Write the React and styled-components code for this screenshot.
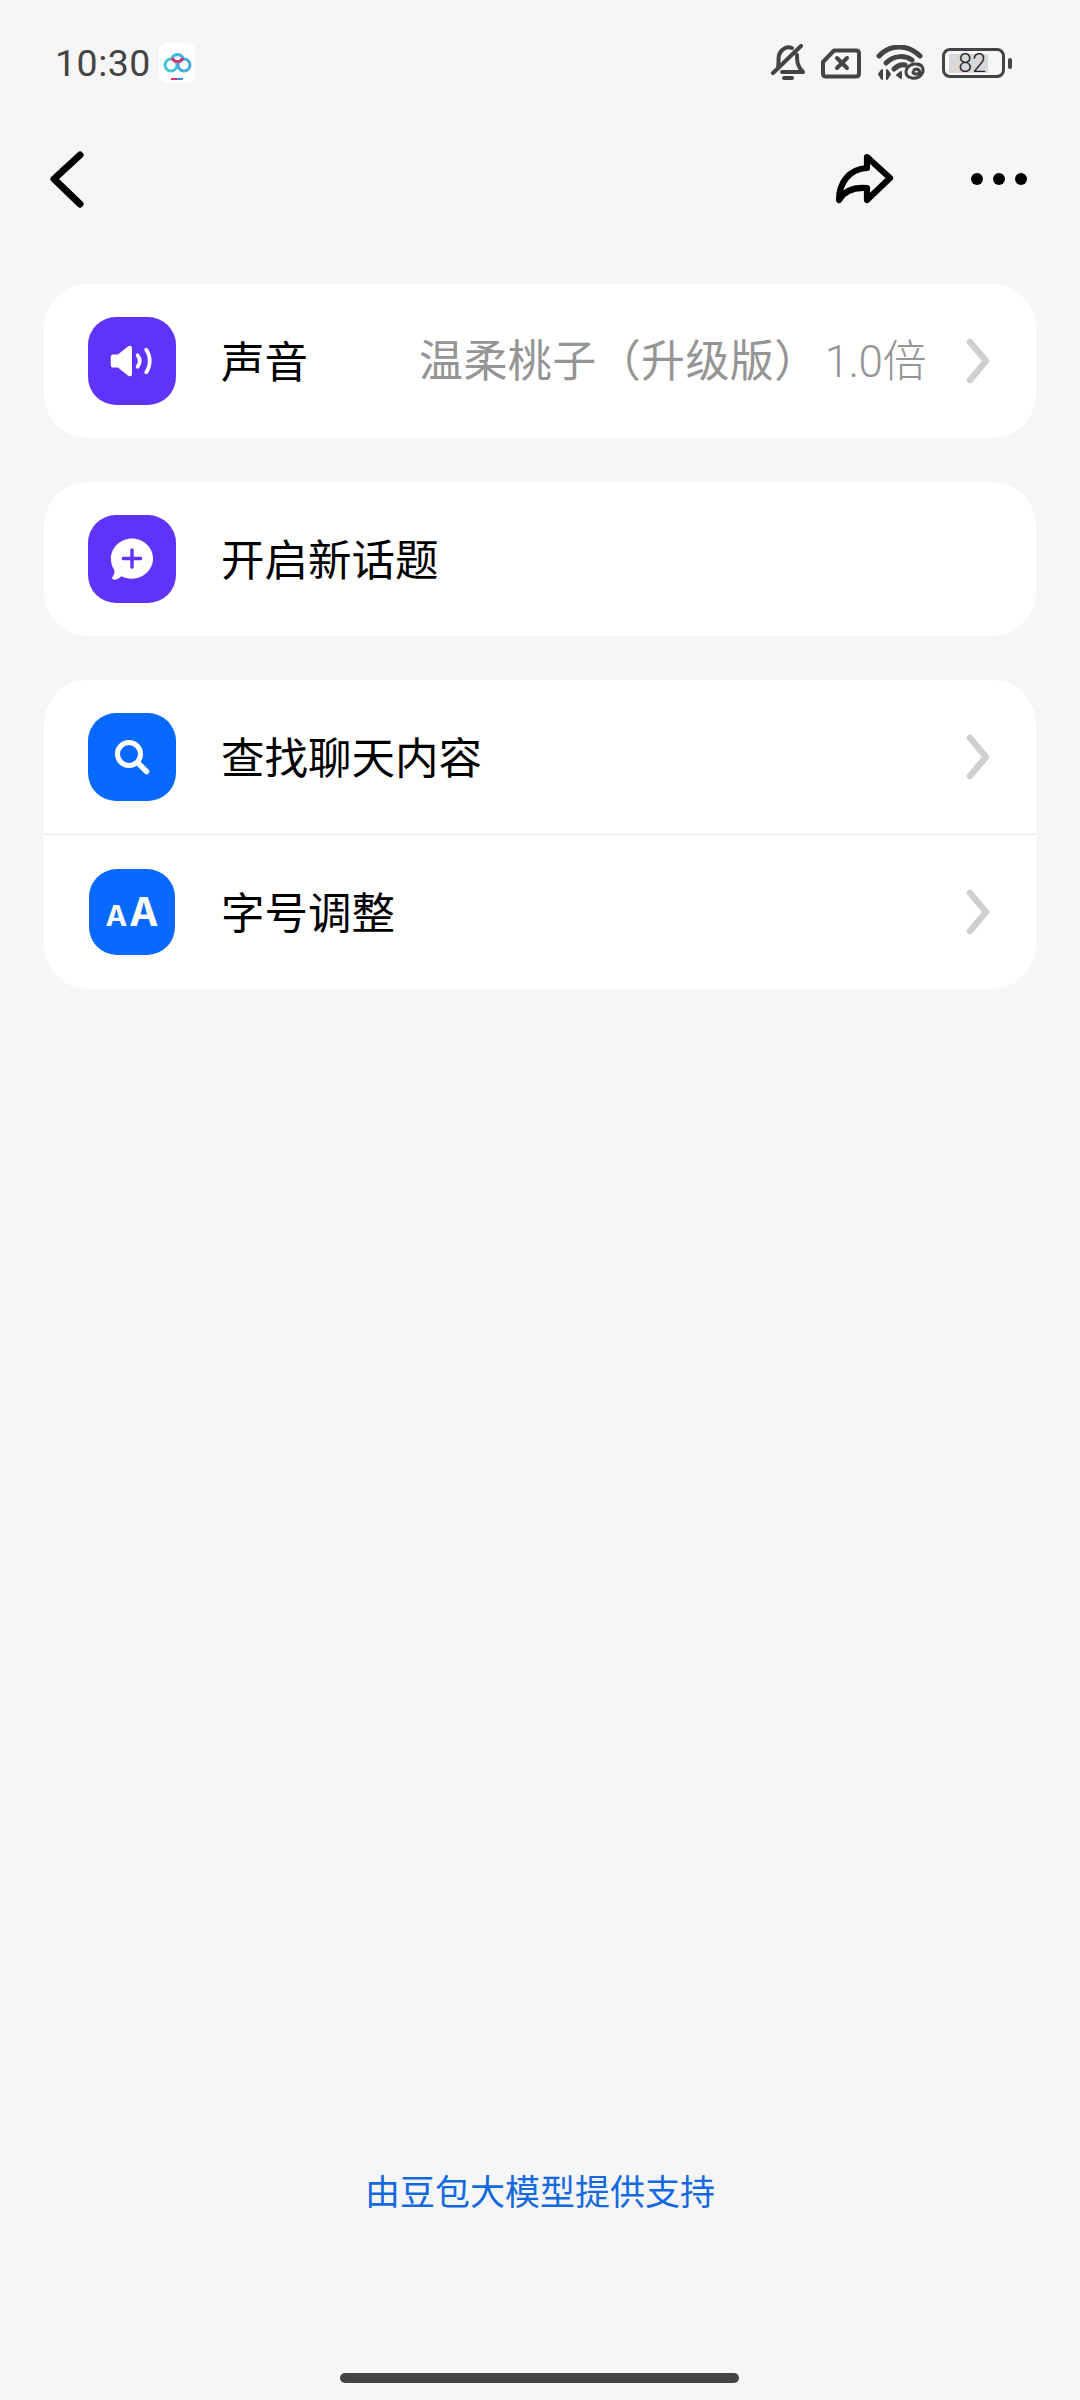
// App.jsx
import React from "react";
import styled, { createGlobalStyle } from "styled-components";

const GlobalStyle = createGlobalStyle`
  html, body {
    margin: 0;
    padding: 0;
    background-color: #f6f6f7;
    font-family: "Noto Sans CJK SC", "Noto Sans", sans-serif;
  }
`;

const Page = styled.div`
  display: flex;
  flex-direction: column;
  width: 1080px;
  height: 2400px;
  overflow: hidden;
  background-color: #f6f6f7;
`;

const StatusBar = styled.div`
  display: flex;
  align-items: center;
  justify-content: space-between;
  height: 124px;
  padding: 2px 68px 0 55px;
  box-sizing: border-box;
  color: #444;
`;

const StatusLeft = styled.div`
  display: flex;
  align-items: center;
  gap: 8px;
`;

const Clock = styled.span`
  font-family: "Roboto", sans-serif;
  font-size: 37.5px;
  line-height: 48px;
  letter-spacing: 0.5px;
`;

const AppBadge = styled.div`
  display: flex;
  width: 36px;
  height: 40px;
  background-color: #fff;
  border-radius: 8px;
`;

const StatusRight = styled.div`
  display: flex;
  align-items: center;
  gap: 15px;
`;

const Battery = styled.div`
  display: flex;
  align-items: center;
  gap: 2px;
  margin-left: 1px;
`;

const BatteryBody = styled.div`
  display: flex;
  align-items: center;
  width: 63px;
  height: 30px;
  box-sizing: border-box;
  border: 3.500px solid #444;
  border-radius: 8px;
  padding: 0 4px;
`;

const BatteryLevel = styled.div`
  display: flex;
  align-items: center;
  justify-content: flex-end;
  width: 39px;
  height: 19px;
  padding-right: 2px;
  box-sizing: border-box;
  background-color: #d8d8d8;
  font-family: "Roboto", sans-serif;
  font-size: 25px;
  font-weight: 300;
  color: #222;
`;

const BatteryTip = styled.div`
  width: 4px;
  height: 11px;
  margin-left: 1px;
  background-color: #444;
  border-radius: 2px;
`;

const NavBar = styled.div`
  display: flex;
  align-items: center;
  justify-content: space-between;
  height: 110px;
  padding: 0 53px 0 48px;
  box-sizing: border-box;
`;

const NavActions = styled.div`
  display: flex;
  align-items: center;
  gap: 77px;
`;

const Dots = styled.div`
  display: flex;
  gap: 10px;
`;

const Dot = styled.span`
  width: 12px;
  height: 12px;
  border-radius: 50%;
  background-color: #000;
`;

const Cards = styled.div`
  display: flex;
  flex-direction: column;
  gap: 44px;
  margin: 50px 44px 0;
`;

const Card = styled.div`
  background-color: #fff;
  border-radius: 44px;
  overflow: hidden;
`;

const Row = styled.div`
  display: flex;
  align-items: center;
  height: ${(p) => p.$height || 154}px;
  padding: 0 46px 0 44px;
  border-top: ${(p) => (p.$divider ? "1px solid #e9e9ea" : "none")};
  box-sizing: border-box;
`;

const IconBox = styled.div`
  display: flex;
  align-items: center;
  justify-content: center;
  flex-shrink: 0;
  width: ${(p) => p.$size || 88}px;
  height: ${(p) => p.$size || 88}px;
  margin: 0 ${(p) => (p.$size ? (88 - p.$size) / 2 : 0)}px;
  border-radius: 28px;
  background-color: ${(p) => p.$color};
`;

const Label = styled.span`
  flex: 1;
  margin: -2px 0 0 45px;
  font-size: 43.5px;
  line-height: 56px;
  color: #000;
`;

const Value = styled.span`
  margin: -2px 40px 0 0;
  font-size: 44px;
  line-height: 56px;
  letter-spacing: 0.4px;
  color: #959595;
`;

const Speed = styled.span`
  margin-left: 6px;
  letter-spacing: -0.5px;
  font-family: "Roboto", "Noto Sans CJK SC", sans-serif;
  font-weight: 300;
`;

const BigA = styled.span`
  font-family: "Inter", sans-serif;
  font-weight: 700;
  font-size: ${(p) => p.$size}px;
  line-height: 1;
  color: #fff;
`;

const AaLetters = styled.div`
  display: flex;
  align-items: baseline;
  gap: 2px;
  margin-top: -2px;
`;

const Footer = styled.div`
  margin-top: auto;
  margin-bottom: 186px;
  text-align: center;
  font-size: 35px;
  line-height: 48px;
  color: #1469e0;
`;

const HomeBar = styled.div`
  position: absolute;
  left: 340px;
  top: 2373px;
  width: 399px;
  height: 10px;
  border-radius: 5px;
  background-color: #444;
`;

const Chevron = () => (
  <svg width="24" height="48" viewBox="0 0 24 48" fill="none">
    <path d="M4 5 L20 24 L4 43" stroke="#cfcfcf" strokeWidth="6.5" strokeLinecap="round" strokeLinejoin="round" />
  </svg>
);

const App = () => (
  <Page>
    <GlobalStyle />
    <StatusBar>
      <StatusLeft>
        <Clock>10:30</Clock>
        <AppBadge>
          <svg width="36" height="40" viewBox="0 0 36 40" fill="none">
            <circle cx="12" cy="22" r="6" stroke="#45c3dd" strokeWidth="3" />
            <circle cx="25" cy="22" r="6" stroke="#45aadd" strokeWidth="3" />
            <path d="M13 15 A6 6 0 0 1 24 15" stroke="#45b8dd" strokeWidth="3" />
            <path d="M13 15 A6 6 0 0 0 24 15" stroke="#d9336f" strokeWidth="3" />
            <path d="M12 36 H18" stroke="#e0306e" strokeWidth="2" />
            <path d="M18 36 H24" stroke="#3a8fd0" strokeWidth="2" />
          </svg>
        </AppBadge>
      </StatusLeft>
      <StatusRight>
        <svg width="36" height="38" viewBox="0 0 36 38" fill="none" stroke="#444" strokeWidth="4" strokeLinecap="round" strokeLinejoin="round">
          <path d="M8 24 C9 19 8 15 9 11 C11 5 17 2 22 4" />
          <path d="M27 11 C27 17 27 22 33 28 H12" />
          <path d="M3 29 L31 2" />
          <path d="M14 34 H22" />
        </svg>
        <svg width="40" height="31" viewBox="0 0 40 31" fill="none" stroke="#444" strokeLinecap="round" strokeLinejoin="round">
          <path d="M13 2.500 H35 C37 2.500 38 3.500 38 5.500 V25.500 C38 27.500 37 28.500 35 28.500 H5 C3 28.500 2 27.500 2 25.500 V14 Z" strokeWidth="4" />
          <path d="M16 10 L26 20 M26 10 L16 20" strokeWidth="4" />
        </svg>
        <svg width="50" height="36" viewBox="0 0 50 36" fill="none" stroke="#444" strokeLinecap="round">
          <path d="M3 11 C14 -1 32 -1 44 11" strokeWidth="5" />
          <path d="M10 18 C18 10 29 10 36 15" strokeWidth="5" />
          <path d="M18 24 C21 21 25 19 29 20" strokeWidth="5" />
          <path d="M3 29 L6 25 V34 Z M11 25 V34 L14 29 Z" strokeWidth="2" fill="#444" strokeLinejoin="round" />
          <path d="M25 27 L21 30 L25 33 Z" strokeWidth="2" fill="#444" strokeLinejoin="round" />
          <path d="M43 20 C38 17 30 21 30 27 C30 34 41 35 45 30 C49 26 47 20 42 19 M38 25 C41 23 45 25 43 28 C41 30 37 29 37 27" strokeWidth="3" />
        </svg>
        <Battery>
          <BatteryBody>
            <BatteryLevel>82</BatteryLevel>
          </BatteryBody>
          <BatteryTip />
        </Battery>
      </StatusRight>
    </StatusBar>

    <NavBar>
      <svg width="40" height="60" viewBox="0 0 40 60" fill="none">
        <path d="M32 6 L6 30 L32 55" stroke="#000" strokeWidth="7" strokeLinecap="round" strokeLinejoin="round" />
      </svg>
      <NavActions>
        <svg width="60" height="52" viewBox="0 0 60 52" fill="none">
          <path d="M33 4 L56 25 L33 47 V35 C20 34 10 38 5 47 C5 30 15 16 33 15 Z" stroke="#000" strokeWidth="6.2" strokeLinejoin="round" />
        </svg>
        <Dots>
          <Dot />
          <Dot />
          <Dot />
        </Dots>
      </NavActions>
    </NavBar>

    <Cards>
      <Card>
        <Row>
          <IconBox $color="#5f33fb">
            <svg width="44" height="34" viewBox="0 0 46 36" fill="none">
              <path d="M3 11 H8 L19 2.500 C21 1 23 2 23 4.500 V31.500 C23 34 21 35 19 33.500 L8 25 H3 C1.500 25 0.500 24 0.500 22.500 V13.500 C0.500 12 1.500 11 3 11 Z" fill="#fff" />
              <path d="M29 12 C32 16 32 20 29 24" stroke="#fff" strokeWidth="4" strokeLinecap="round" />
              <path d="M38 6 C43 13 43 23 38 30" stroke="#fff" strokeWidth="4" strokeLinecap="round" />
            </svg>
          </IconBox>
          <Label>声音</Label>
          <Value>
            温柔桃子（升级版）<Speed>1.0倍</Speed>
          </Value>
          <Chevron />
        </Row>
      </Card>

      <Card>
        <Row>
          <IconBox $color="#5f33fb">
            <svg width="44" height="45" viewBox="0 0 46 46" fill="none">
              <path d="M23 1 C35 1 45 10.500 45 22 C45 33.500 35 43 23 43 C18 43 15 42 12 40.500 C9 43 6 44.500 3.500 44 C2 43.500 2 42 3 40.500 C4.500 38.500 5 36 4.500 34 C2 30.500 1 26.500 1 22 C1 10.500 11 1 23 1 Z" fill="#fff" />
              <path d="M23 13 V31 M14 22 H32" stroke="#5f33fb" strokeWidth="3.6" strokeLinecap="round" />
            </svg>
          </IconBox>
          <Label>开启新话题</Label>
        </Row>
      </Card>

      <Card>
        <Row>
          <IconBox $color="#0769ff">
            <svg width="36" height="36" viewBox="0 0 36 36" fill="none">
              <circle cx="15" cy="15" r="11.500" stroke="#fff" strokeWidth="5" />
              <path d="M24 24 L32.500 32.500" stroke="#fff" strokeWidth="5.500" strokeLinecap="round" />
            </svg>
          </IconBox>
          <Label>查找聊天内容</Label>
          <Chevron />
        </Row>
        <Row $divider $height={155}>
          <IconBox $color="#0769ff" $size={86}>
            <AaLetters>
              <BigA $size={29}>A</BigA>
              <BigA $size={39}>A</BigA>
            </AaLetters>
          </IconBox>
          <Label>字号调整</Label>
          <Chevron />
        </Row>
      </Card>
    </Cards>

    <Footer>由豆包大模型提供支持</Footer>
    <HomeBar />
  </Page>
);

export default App;
